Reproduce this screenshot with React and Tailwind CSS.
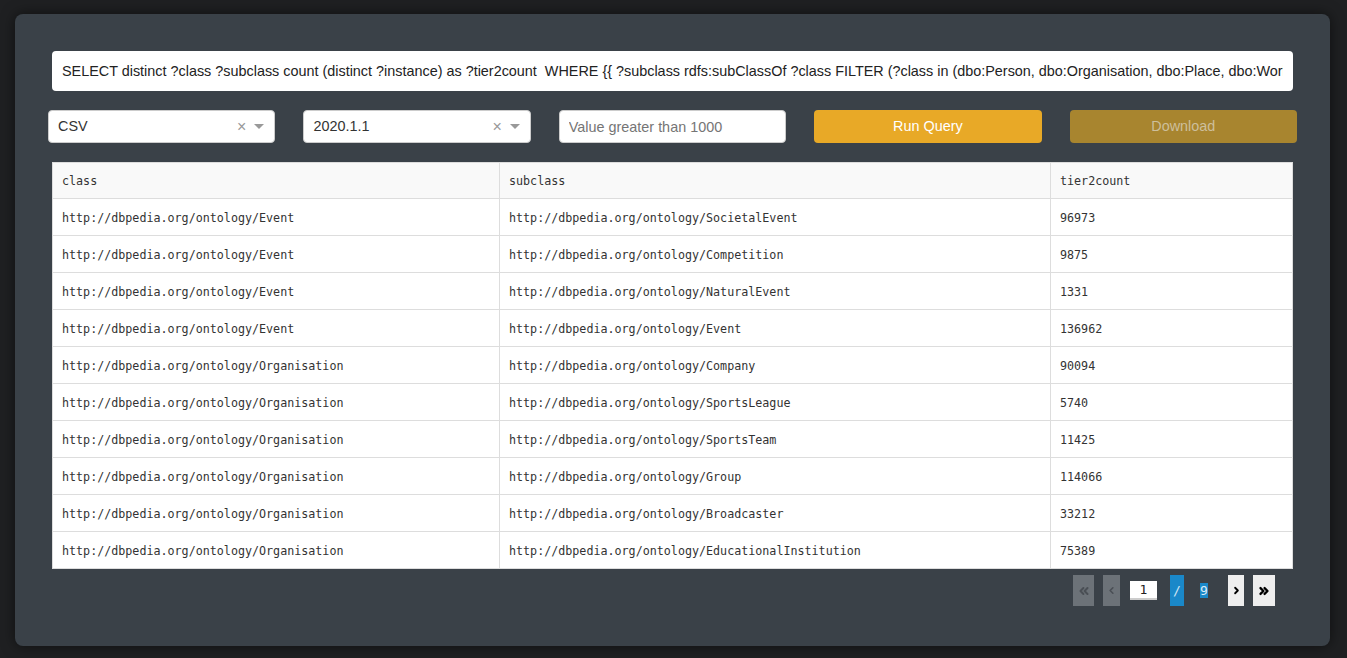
import { ChevronsLeft, ChevronLeft, ChevronRight, ChevronsRight } from "lucide-react";

const query =
	"SELECT distinct ?class ?subclass count (distinct ?instance) as ?tier2count  WHERE {{ ?subclass rdfs:subClassOf ?class FILTER (?class in (dbo:Person, dbo:Organisation, dbo:Place, dbo:Work, dbo:Event)) ?instance a ?subclass }}";

const base = "http://dbpedia.org/ontology/";

const rows = [
	["Event", "SocietalEvent", "96973"],
	["Event", "Competition", "9875"],
	["Event", "NaturalEvent", "1331"],
	["Event", "Event", "136962"],
	["Organisation", "Company", "90094"],
	["Organisation", "SportsLeague", "5740"],
	["Organisation", "SportsTeam", "11425"],
	["Organisation", "Group", "114066"],
	["Organisation", "Broadcaster", "33212"],
	["Organisation", "EducationalInstitution", "75389"],
];

function Select({ value }) {
	return (
		<div className="h-full bg-white rounded-[4px] border border-[#ccc] flex items-center pl-[9px] pr-[10px]">
			<span className="flex-1 text-[14.4px] text-[#333]">{value}</span>
			<span className="text-[#999] text-[16px] leading-none mr-[8px]">×</span>
			<span className="w-0 h-0 border-l-[5px] border-r-[5px] border-t-[5px] border-l-transparent border-r-transparent border-t-[#999]" />
		</div>
	);
}

export default function App() {
	return (
		<div
			className="w-full h-[658px] bg-[#1f2022] pt-[14px] pl-[15px] overflow-hidden"
			style={{ fontFamily: '"Liberation Sans", Arial, sans-serif' }}
		>
			<div className="w-[1315px] h-[632px] rounded-lg bg-[#3a4148] shadow-[0_0_14px_rgba(0,0,0,0.55)] pt-[37px] px-[33px]">
				{/* Query */}
				<div className="px-[4px]">
					<input
						readOnly
						value={query}
						className="w-full h-[40px] bg-white rounded-[4px] px-[10px] text-[14.4px] text-[#222] outline-none"
					/>
				</div>

				{/* Controls */}
				<div className="mt-[19px] h-[33px] grid grid-cols-5 gap-[28px]">
					<Select value="CSV" />
					<Select value="2020.1.1" />
					<input
						placeholder="Value greater than 1000"
						className="h-full bg-white rounded-[4px] border border-[#ccc] px-[9px] text-[14.4px] text-[#333] placeholder:text-[#757575] outline-none"
					/>
					<button className="h-full rounded-[4px] bg-[#e8a927] text-white text-[14.4px] pt-[1px]">
						Run Query
					</button>
					<button className="h-full rounded-[4px] bg-[#a8852f] text-[#cdbf9c] text-[14.4px] pt-[1px]">
						Download
					</button>
				</div>

				{/* Table */}
				<div className="mt-[19px] px-[4px]">
					<table
						className="w-full border-collapse bg-white text-[11.7px] text-[#333] table-fixed"
						style={{ fontFamily: '"DejaVu Sans Mono", monospace' }}
					>
						<colgroup>
							<col className="w-[447px]" />
							<col className="w-[551px]" />
							<col />
						</colgroup>
						<thead>
							<tr className="h-[36px] bg-[#f9f9f9]">
								<th className="border border-[#ddd] text-left font-normal pl-[9px] pt-[3px]">class</th>
								<th className="border border-[#ddd] text-left font-normal pl-[9px] pt-[3px]">subclass</th>
								<th className="border border-[#ddd] text-left font-normal pl-[9px] pt-[3px]">tier2count</th>
							</tr>
						</thead>
						<tbody>
							{rows.map((r, i) => (
								<tr key={i} className="h-[37px]">
									<td className="border border-[#ddd] pl-[9px] pt-[3px]">{base + r[0]}</td>
									<td className="border border-[#ddd] pl-[9px] pt-[3px]">{base + r[1]}</td>
									<td className="border border-[#ddd] pl-[9px] pt-[3px]">{r[2]}</td>
								</tr>
							))}
						</tbody>
					</table>
				</div>

				{/* Pagination */}
				<div
					className="mt-[6px] flex justify-end items-center pr-[22px] h-[31px]"
					style={{ fontFamily: '"DejaVu Sans Mono", monospace' }}
				>
					<button className="w-[21px] h-full bg-[#6c7278] flex items-center justify-center text-[#4a4f55]">
						<ChevronsLeft size={14} strokeWidth={3.5} />
					</button>
					<button className="ml-[9px] w-[17px] h-full bg-[#6c7278] flex items-center justify-center text-[#4a4f55]">
						<ChevronLeft size={11} strokeWidth={3.5} />
					</button>
					<input
						readOnly
						value="1"
						className="ml-[10px] w-[27px] h-[19px] bg-white border-b-2 border-[#ccc] text-center text-[13px] text-[#222] outline-none"
					/>
					<span className="ml-[13px] w-[14px] h-full bg-[#1a88c9] text-[#cfe6f5] text-[13px] flex items-center justify-center">
						/
					</span>
					<span className="ml-[16px] w-[8px] bg-[#1a88c9] text-[#dcecf7] text-[13px] leading-[15px] text-center">9</span>
					<button className="ml-[20px] w-[16px] h-full bg-[#eeeeee] flex items-center justify-center text-black">
						<ChevronRight size={11} strokeWidth={4} />
					</button>
					<button className="ml-[9px] w-[22px] h-full bg-[#eeeeee] flex items-center justify-center text-black">
						<ChevronsRight size={14} strokeWidth={4} />
					</button>
				</div>
			</div>
		</div>
	);
}
